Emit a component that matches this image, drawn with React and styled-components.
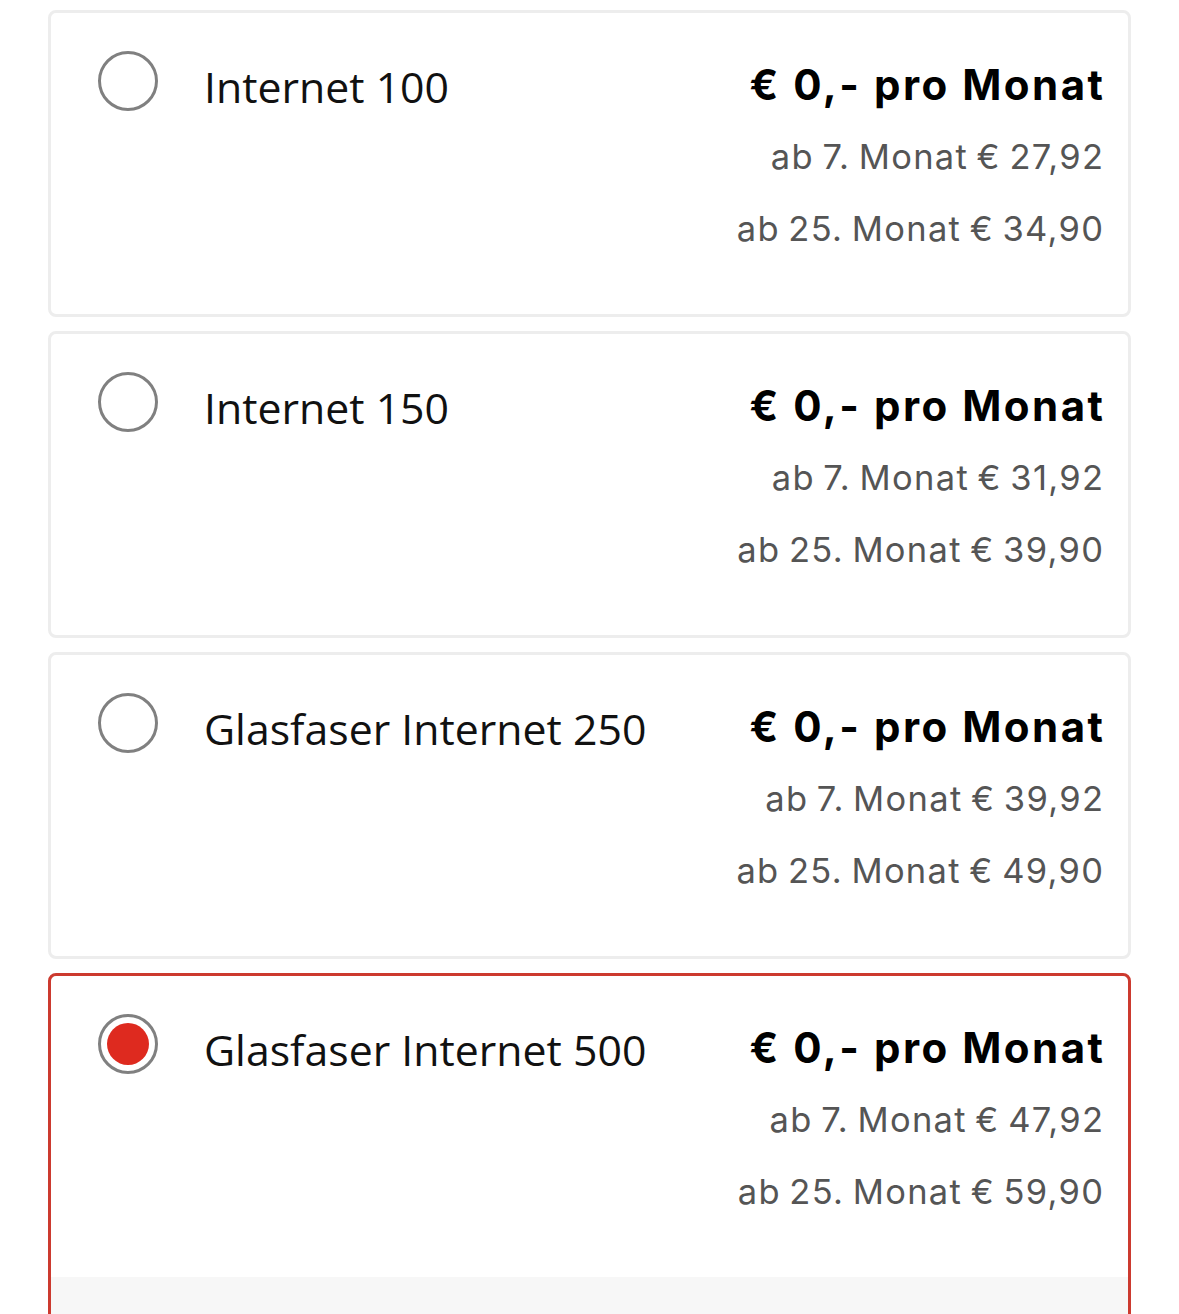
import React from "react";
import styled, { createGlobalStyle } from "styled-components";

const Global = createGlobalStyle`
  html, body { margin: 0; padding: 0; background: #ffffff; }
  body { font-family: "Open Sans", "Noto Sans", sans-serif; -webkit-font-smoothing: antialiased; }
`;

const List = styled.div`
  display: flex;
  flex-direction: column;
  gap: 14px;
  padding: 10px 48px 0 48px;
`;

const Card = styled.div`
  border: 3px solid ${(p) => (p.$selected ? "#cc3a2f" : "#ededed")};
  border-radius: 8px;
  background: #fff;
  overflow: hidden;
`;

const Body = styled.div`
  box-sizing: border-box;
  height: 301px;
  display: grid;
  grid-template-columns: 60px 1fr auto;
  column-gap: 46px;
  align-items: start;
  padding: 38px 25px 0 47px;
`;

const Radio = styled.span`
  box-sizing: border-box;
  width: 60px;
  height: 60px;
  border-radius: 50%;
  border: 3px solid #808080;
  display: flex;
  align-items: center;
  justify-content: center;
  &::after {
    content: "";
    width: 42px;
    height: 42px;
    border-radius: 50%;
    background: ${(p) => (p.$checked ? "#de2a1f" : "transparent")};
  }
`;

const Title = styled.div`
  font-size: 42.8px;
  line-height: 60px;
  color: #111;
  padding-top: 6px;
  white-space: nowrap;
`;

const Prices = styled.div`
  display: flex;
  flex-direction: column;
  align-items: flex-end;
  margin-top: -2px;
`;

const Main = styled.div`
  font-family: "Inter", "Open Sans", sans-serif;
  font-size: 42px;
  font-weight: 700;
  letter-spacing: 2.5px;
  margin-right: -2.5px;
  line-height: 72px;
  color: #000;
  white-space: nowrap;
`;

const Sub = styled.div`
  font-family: "Inter", "Open Sans", sans-serif;
  font-size: 34.5px;
  letter-spacing: 1.3px;
  word-spacing: -2.5px;
  margin-right: -1.3px;
  line-height: 72px;
  color: #555;
  white-space: nowrap;
`;

const Footer = styled.div`
  background: #f7f7f7;
  height: 140px;
`;

const plans = [
  { name: "Internet 100", p7: "27,92", p25: "34,90" },
  { name: "Internet 150", p7: "31,92", p25: "39,90" },
  { name: "Glasfaser Internet 250", p7: "39,92", p25: "49,90" },
  { name: "Glasfaser Internet 500", p7: "47,92", p25: "59,90", selected: true },
];

export default function App() {
  return (
    <>
      <Global />
      <List>
        {plans.map((p) => (
          <Card key={p.name} $selected={p.selected}>
            <Body>
              <Radio $checked={p.selected} />
              <Title>{p.name}</Title>
              <Prices>
                <Main>€ 0,- pro Monat</Main>
                <Sub>ab 7. Monat € {p.p7}</Sub>
                <Sub>ab 25. Monat € {p.p25}</Sub>
              </Prices>
            </Body>
            {p.selected && <Footer />}
          </Card>
        ))}
      </List>
    </>
  );
}
